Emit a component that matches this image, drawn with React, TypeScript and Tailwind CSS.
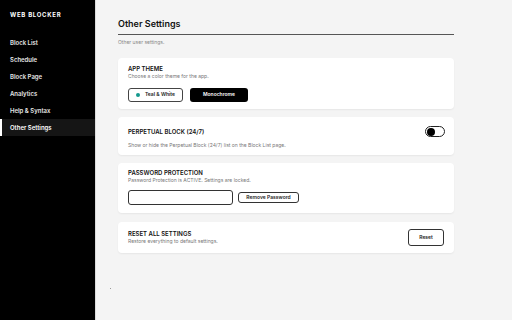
import { useState } from 'react';

const navItems = ['Block List', 'Schedule', 'Block Page', 'Analytics', 'Help & Syntax', 'Other Settings'];

function Card({ children, className = '' }: { children: React.ReactNode; className?: string }) {
  return (
    <div className={`bg-white rounded-[4px] shadow-[0_1px_2px_rgba(0,0,0,0.06)] px-[10px] ${className}`}>
      {children}
    </div>
  );
}

export default function App() {
  const [active] = useState('Other Settings');

  return (
    <div className="flex w-[512px] h-[320px] overflow-hidden bg-[#f4f4f4]" style={{ fontFamily: 'Inter, "Liberation Sans", sans-serif' }}>
      {/* Sidebar */}
      <aside className="w-[95px] shrink-0 bg-black text-white">
        <div className="pl-[10px] pt-[11px] h-[34px] text-[6px] leading-[8px] font-bold tracking-[0.12em]">WEB BLOCKER</div>
        <nav className="flex flex-col">
          {navItems.map((item) => (
            <div
              key={item}
              className={`h-[17px] flex items-center text-[6px] font-semibold ${
                item === active ? 'bg-[#151515] border-l-2 border-white pl-[8px] text-white' : 'pl-[10px] text-[#e5e5e5]'
              }`}
            >
              {item}
            </div>
          ))}
        </nav>
      </aside>

      {/* Main */}
      <main className="flex-1 border-l border-[#dcdcdc] pl-[22px] pt-[18px]">
        <div className="w-[336px]">
          <h1 className="text-[9px] leading-[12px] font-semibold text-[#111]">Other Settings</h1>
          <div className="mt-[4px] h-px bg-[#555]" />
          <p className="mt-[4px] text-[5px] leading-[7px] text-[#888]">Other user settings.</p>

          <div className="mt-[12px] flex flex-col gap-[8px]">
            {/* App theme */}
            <Card className="pt-[7px] pb-[7px]">
              <div className="text-[6px] leading-[8px] font-semibold text-[#111]">APP THEME</div>
              <div className="text-[5px] leading-[7px] text-[#777]">Choose a color theme for the app.</div>
              <div className="mt-[8px] flex gap-[7px]">
                <button className="h-[14px] w-[55px] flex items-center justify-center gap-[5px] border border-[#444] rounded-[3px] bg-white text-[5px] font-semibold text-[#222]">
                  <span className="w-[4px] h-[4px] rounded-full bg-[#14998e]" />
                  Teal &amp; White
                </button>
                <button className="h-[14px] w-[58px] flex items-center justify-center rounded-[3px] bg-black text-[5px] font-semibold text-white">
                  Monochrome
                </button>
              </div>
            </Card>

            {/* Perpetual block */}
            <Card className="pt-[9px] pb-[8px] h-[38px]">
              <div className="flex items-center justify-between">
                <div className="text-[6px] leading-[8px] font-semibold text-[#111]">PERPETUAL BLOCK (24/7)</div>
                <div className="w-[20px] h-[11px] rounded-full border border-[#222] bg-white flex items-center px-[1px] -mr-[1px]">
                  <span className="w-[8px] h-[8px] rounded-full bg-black" />
                </div>
              </div>
              <div className="mt-[5px] text-[5px] leading-[7px] text-[#777]">
                Show or hide the Perpetual Block (24/7) list on the Block List page.
              </div>
            </Card>

            {/* Password */}
            <Card className="pt-[6px] pb-[8px]">
              <div className="text-[6px] leading-[8px] font-semibold text-[#111]">PASSWORD PROTECTION</div>
              <div className="text-[5px] leading-[7px] text-[#777]">Password Protection is ACTIVE. Settings are locked.</div>
              <div className="mt-[6px] flex items-center gap-[5px]">
                <input className="w-[105px] h-[15px] border border-[#333] rounded-[3px] bg-white outline-none" type="password" />
                <button className="h-[11px] w-[61px] border border-[#333] rounded-[3px] bg-white text-[5px] font-semibold text-[#222]">
                  Remove Password
                </button>
              </div>
            </Card>

            {/* Reset */}
            <Card className="h-[31px] mt-[1px] flex items-center justify-between">
              <div>
                <div className="text-[6px] leading-[8px] font-semibold text-[#111]">RESET ALL SETTINGS</div>
                <div className="text-[5px] leading-[7px] text-[#777]">Restore everything to default settings.</div>
              </div>
              <button className="w-[36px] h-[17px] border border-[#333] rounded-[3px] bg-white text-[5px] font-semibold text-[#222]">
                Reset
              </button>
            </Card>
          </div>
        </div>
        <div className="mt-[35px] -ml-[8px] w-px h-px bg-[#999]" />
      </main>
    </div>
  );
}
